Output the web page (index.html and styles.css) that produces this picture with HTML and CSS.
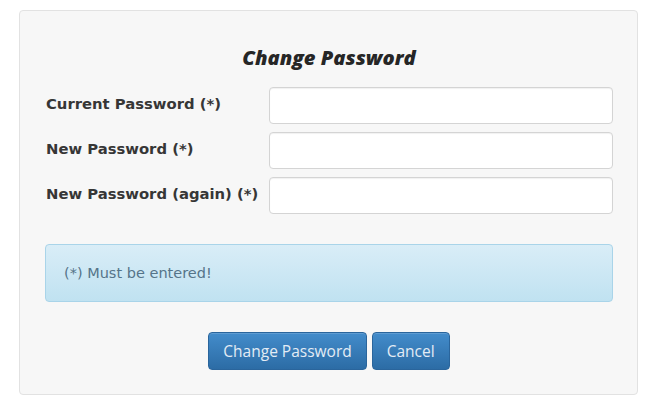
FILE: index.html
```html
<!DOCTYPE html>
<html lang="en">
<head>
<meta charset="utf-8">
<title>Change Password</title>
<link rel="stylesheet" href="styles.css">
</head>
<body>
<div class="page">
  <form class="panel">
    <h2 class="panel-title">Change Password</h2>
    <div class="fields">
      <div class="row">
        <label class="label" for="cur">Current Password (*)</label>
        <input class="input" id="cur" type="password">
      </div>
      <div class="row">
        <label class="label" for="new1">New Password (*)</label>
        <input class="input" id="new1" type="password">
      </div>
      <div class="row">
        <label class="label" for="new2">New Password (again) (*)</label>
        <input class="input" id="new2" type="password">
      </div>
    </div>
    <div class="alert">(*) Must be entered!</div>
    <div class="actions">
      <button class="btn" type="submit">Change Password</button>
      <button class="btn" type="button">Cancel</button>
    </div>
  </form>
</div>
</body>
</html>
```
FILE: styles.css
```css
html, body {
  margin: 0;
  padding: 0;
  background: #ffffff;
  font-family: "Open Sans", "Noto Sans", sans-serif;
  color: #333333;
}

.page {
  padding: 10px 15px 14px 19px;
}

.panel {
  box-sizing: border-box;
  width: 619px;
  height: 385px;
  margin: 0;
  padding: 34px 24px 0 25px;
  background: #f7f7f7;
  border: 1px solid #e2e2e2;
  border-radius: 4px;
  display: flex;
  flex-direction: column;
}

.panel-title {
  margin: 0 0 18px 0;
  text-align: center;
  font-size: 20.2px;
  line-height: 24px;
  font-weight: 800;
  font-style: italic;
  color: #262626;
}

.fields {
  display: flex;
  flex-direction: column;
  gap: 8px;
}

.row {
  display: flex;
  align-items: center;
}

.label {
  width: 223px;
  padding-left: 1px;
  padding-bottom: 5px;
  font-family: "DejaVu Sans", "Open Sans", sans-serif;
  font-size: 14.8px;
  font-weight: 700;
  color: #363636;
  white-space: nowrap;
}

.input {
  box-sizing: border-box;
  width: 345px;
  height: 37px;
  margin: 0;
  background: #ffffff;
  border: 1px solid #d4d4d4;
  border-radius: 4px;
  box-shadow: inset 0 1px 1px rgba(0, 0, 0, 0.06);
}

.alert {
  box-sizing: border-box;
  margin-top: 30px;
  height: 58px;
  padding: 0 18px;
  display: flex;
  align-items: center;
  font-family: "DejaVu Sans", "Open Sans", sans-serif;
  font-size: 14.5px;
  color: #557489;
  background: linear-gradient(to bottom, #d9edf7, #c0e2f1);
  border: 1px solid #a9d4e9;
  border-radius: 4px;
}

.actions {
  margin-top: 30px;
  display: flex;
  justify-content: center;
  gap: 5px;
}

.btn {
  box-sizing: border-box;
  height: 38px;
  padding: 0 14px;
  font-family: inherit;
  font-size: 15.5px;
  color: #e3ecf5;
  background: linear-gradient(to bottom, #438ccb, #2c6ca5);
  border: 1px solid #2a659c;
  border-radius: 4px;
  box-shadow: inset 0 1px 0 rgba(255, 255, 255, 0.15);
}
```
